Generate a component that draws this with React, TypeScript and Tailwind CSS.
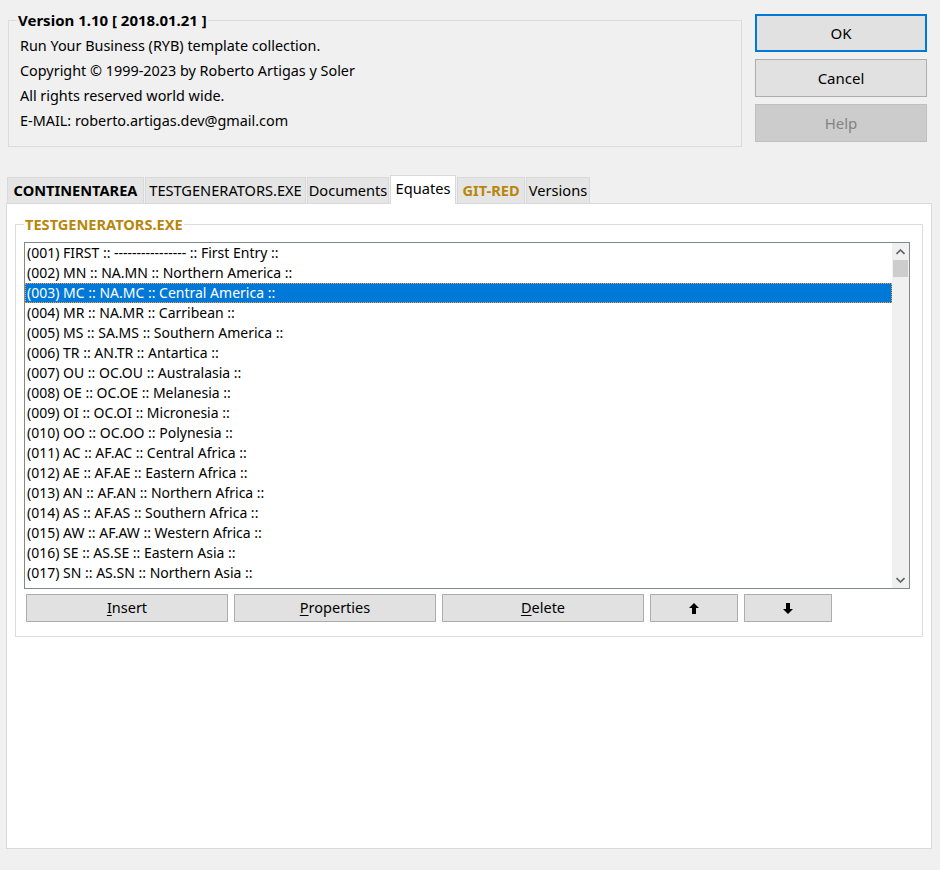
import React from "react";

const rows = [
  "(001) FIRST :: ---------------- :: First Entry ::",
  "(002) MN :: NA.MN :: Northern America ::",
  "(003) MC :: NA.MC :: Central America ::",
  "(004) MR :: NA.MR :: Carribean ::",
  "(005) MS :: SA.MS :: Southern America ::",
  "(006) TR :: AN.TR :: Antartica ::",
  "(007) OU :: OC.OU :: Australasia ::",
  "(008) OE :: OC.OE :: Melanesia ::",
  "(009) OI :: OC.OI :: Micronesia ::",
  "(010) OO :: OC.OO :: Polynesia ::",
  "(011) AC :: AF.AC :: Central Africa ::",
  "(012) AE :: AF.AE :: Eastern Africa ::",
  "(013) AN :: AF.AN :: Northern Africa ::",
  "(014) AS :: AF.AS :: Southern Africa ::",
  "(015) AW :: AF.AW :: Western Africa ::",
  "(016) SE :: AS.SE :: Eastern Asia ::",
  "(017) SN :: AS.SN :: Northern Asia ::",
];

const tabs = [
  { label: "CONTINENTAREA", cls: "font-bold text-black", w: "w-[137px]" },
  { label: "TESTGENERATORS.EXE", cls: "text-black", w: "w-[161px]" },
  { label: "Documents", cls: "text-black", w: "w-[82px]" },
  { label: "Equates", cls: "text-black", w: "w-[66px]", active: true },
  { label: "GIT-RED", cls: "font-bold text-[#b8860b]", w: "w-[68px]" },
  { label: "Versions", cls: "text-black", w: "w-[64px]" },
];

const ArrowUp = () => (
  <svg width="10" height="11" viewBox="0 0 10 11">
    <path d="M5 0 L10 5 L7 5 L7 11 L3 11 L3 5 L0 5 Z" fill="#000" />
  </svg>
);

const ArrowDown = () => (
  <svg width="10" height="11" viewBox="0 0 10 11">
    <path d="M3 0 L7 0 L7 6 L10 6 L5 11 L0 6 L3 6 Z" fill="#000" />
  </svg>
);

const Btn: React.FC<{ className?: string; children: React.ReactNode }> = ({ className, children }) => (
  <button className={`h-[28px] bg-[#e1e1e1] border border-[#adadad] flex items-center justify-center text-[14.5px] text-black ${className ?? ""}`}>
    {children}
  </button>
);

const App: React.FC = () => {
  return (
    <div
      className="w-[940px] h-[870px] bg-[#f0f0f0] text-[14px] text-black overflow-hidden"
      style={{ fontFamily: '"Noto Sans", "Open Sans", sans-serif' }}
    >
      {/* header: version info + dialog buttons */}
      <div className="flex pl-[8px]">
        <fieldset className="mt-[11px] w-[734px] h-[136px] border border-[#dcdcdc] pl-[8px]">
          <legend className="px-[1px] font-bold leading-[18px] text-[15px]">Version 1.10 [ 2018.01.21 ]</legend>
          <div className="pt-[4px] leading-[25px] pl-[3px] text-[14.4px]">
            <div>Run Your Business (RYB) template collection.</div>
            <div>Copyright © 1999-2023 by Roberto Artigas y Soler</div>
            <div>All rights reserved world wide.</div>
            <div>E-MAIL: roberto.artigas.dev@gmail.com</div>
          </div>
        </fieldset>
        <div className="ml-[13px] mt-[14px] w-[172px] flex flex-col gap-[7px]">
          <button className="h-[38px] bg-[#e1e1e1] border-2 border-[#0078d7] text-[15px]">OK</button>
          <button className="h-[38px] bg-[#e1e1e1] border border-[#adadad] text-[15px]">Cancel</button>
          <button className="h-[38px] bg-[#cccccc] border border-[#bfbfbf] text-[15px] text-[#838383]">Help</button>
        </div>
      </div>

      {/* tabs */}
      <div className="mt-[28px] pl-[7px] flex items-end h-[28px] gap-[1px] text-[14.6px]">
        {tabs.map((t) =>
          t.active ? (
            <div
              key={t.label}
              className={`${t.w} h-[29px] bg-white border border-b-0 border-[#d9d9d9] flex items-start justify-center pt-[2px] relative z-10 -mb-[1px] ${t.cls}`}
            >
              {t.label}
            </div>
          ) : (
            <div
              key={t.label}
              className={`${t.w} h-[26px] bg-[#e5e5e5] border border-b-0 border-[#d9d9d9] flex items-center justify-center whitespace-nowrap ${t.cls}`}
            >
              {t.label}
            </div>
          )
        )}
      </div>

      {/* tab panel */}
      <div className="ml-[6px] w-[926px] h-[646px] bg-white border border-[#d9d9d9] pl-[8px] pt-[11px]">
        <fieldset className="w-[908px] h-[422px] border border-[#dcdcdc] pl-[8px]">
          <legend className="px-[1px] font-bold text-[#b8860b] leading-[18px] text-[14.6px]">TESTGENERATORS.EXE</legend>
          <div className="mt-[9px] w-[886px] h-[347px] border border-[#828790] flex overflow-hidden">
            <div className="flex-1 overflow-hidden">
              {rows.map((r, i) =>
                i === 2 ? (
                  <div
                    key={r}
                    className="h-[20px] leading-[18px] bg-[#0078d7] text-white border border-dotted border-[#f0a040] pl-[1px] whitespace-nowrap"
                  >
                    {r}
                  </div>
                ) : (
                  <div key={r} className="h-[20px] leading-[20px] pl-[2px] whitespace-nowrap">
                    {r}
                  </div>
                )
              )}
            </div>
            <div className="w-[17px] bg-[#f0f0f0] flex flex-col">
              <div className="h-[17px] flex items-center justify-center">
                <svg width="9" height="6" viewBox="0 0 9 6">
                  <path d="M0.5 5 L4.5 1 L8.5 5" stroke="#606060" strokeWidth="1.6" fill="none" />
                </svg>
              </div>
              <div className="h-[17px] bg-[#cdcdcd] mx-[1px]" />
              <div className="flex-1" />
              <div className="h-[17px] flex items-center justify-center">
                <svg width="9" height="6" viewBox="0 0 9 6">
                  <path d="M0.5 1 L4.5 5 L8.5 1" stroke="#606060" strokeWidth="1.6" fill="none" />
                </svg>
              </div>
            </div>
          </div>
          <div className="mt-[5px] ml-[2px] flex gap-[6px]">
            <Btn className="w-[202px]">
              <span className="block first-letter:underline underline-offset-2">Insert</span>
            </Btn>
            <Btn className="w-[202px]">
              <span className="block first-letter:underline underline-offset-2">Properties</span>
            </Btn>
            <Btn className="w-[202px]">
              <span className="block first-letter:underline underline-offset-2">Delete</span>
            </Btn>
            <Btn className="w-[88px]">
              <ArrowUp />
            </Btn>
            <Btn className="w-[88px]">
              <ArrowDown />
            </Btn>
          </div>
        </fieldset>
      </div>
    </div>
  );
};

export default App;
